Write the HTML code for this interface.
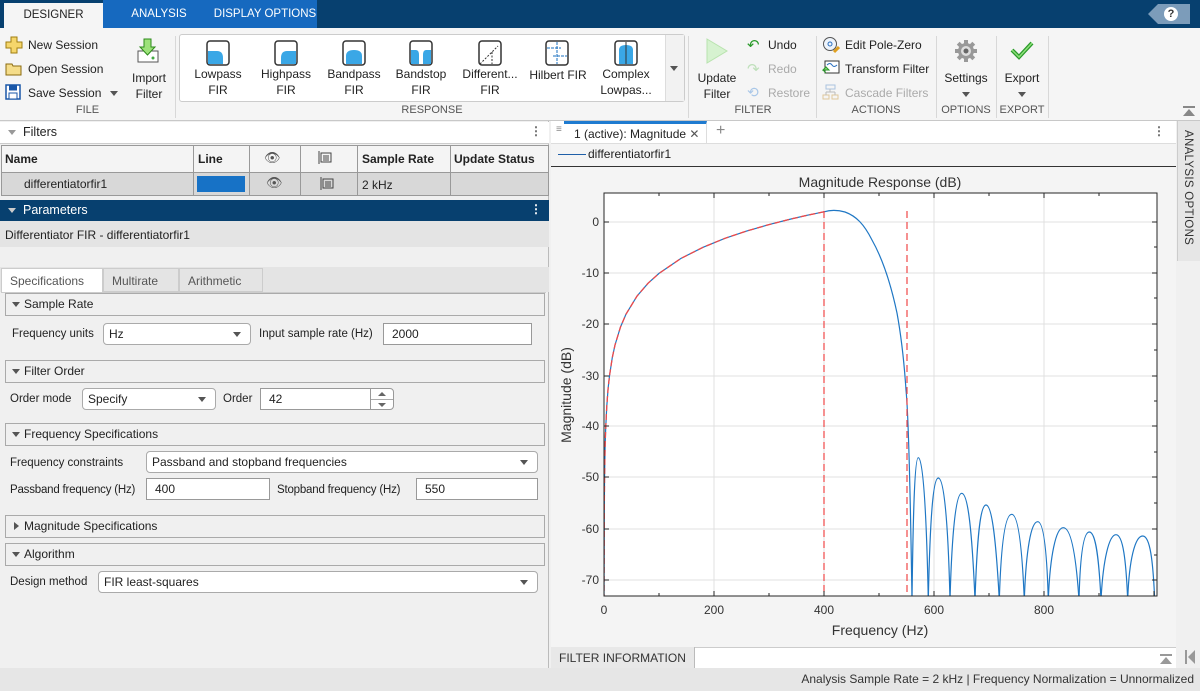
<!DOCTYPE html>
<html><head><meta charset="utf-8"><style>
*{box-sizing:border-box;margin:0;padding:0}
body{width:1200px;height:691px;overflow:hidden;background:#f0f0f0;font-family:"Liberation Sans",sans-serif;font-size:12px;color:#222;position:relative}
.a{position:absolute}
.tabbar{left:0;top:0;width:1200px;height:28px;background:#07406f}
.tab{position:absolute;top:0;height:28px;line-height:28px;text-align:center;font-size:11.5px;color:#fff}
.rib{left:0;top:28px;width:1200px;height:93px;background:#f5f5f5;border-bottom:1px solid #c8c8c8}
.sec{position:absolute;top:104px;font-size:11px;color:#555;text-align:center}
.vsep{position:absolute;top:36px;width:1px;height:82px;background:#d8d8d8}
.rl{position:absolute;font-size:12px;color:#222;white-space:nowrap}
.dis{color:#aaa}
.ri{position:absolute;text-align:center;font-size:12px;line-height:16px;color:#222}
.hdr{font-size:12.5px}
.grp{position:absolute;left:5px;width:540px;height:23px;border:1px solid #aaa;background:#f0f0f0;font-size:12px;line-height:21px;padding-left:18px}
.grp:before{content:"";position:absolute;left:6px;top:8px;border-left:4px solid transparent;border-right:4px solid transparent;border-top:5px solid #555}
.grp.c:before{left:8px;top:6px;border-top:4px solid transparent;border-bottom:4px solid transparent;border-left:5px solid #555;border-right:0}
.lbl{position:absolute;font-size:11.5px;color:#222;white-space:nowrap}
.dd{position:absolute;height:22px;border:1px solid #aaa;border-radius:4px;background:#fff;font-size:12px;line-height:20px;padding-left:5px}
.dd:after{content:"";position:absolute;right:9px;top:8px;border-left:4px solid transparent;border-right:4px solid transparent;border-top:5px solid #555}
.ed{position:absolute;height:22px;border:1px solid #999;background:#fff;font-size:12px;line-height:20px;padding-left:8px}
</style></head><body>

<div class="a tabbar"></div>
<div class="a" style="left:103px;top:0;width:214px;height:28px;background:#1669bf"></div>
<div class="tab" style="left:4px;width:99px;background:#f5f5f5;color:#222;top:3px;height:25px;line-height:25px">DESIGNER</div>
<div class="tab" style="left:109px;width:100px">ANALYSIS</div>
<div class="tab" style="left:212px;width:106px">DISPLAY OPTIONS</div>
<div class="a" style="left:1158px;top:4px;width:32px;height:20px;background:#7c9cba"></div>
<div class="a" style="left:1148px;top:4px;width:0;height:0;border-top:10px solid transparent;border-bottom:10px solid transparent;border-right:10px solid #7c9cba"></div>
<div class="a" style="left:1164px;top:7px;width:14px;height:14px;border-radius:7px;background:#fff;color:#333;font-size:11px;font-weight:bold;text-align:center;line-height:14px">?</div>

<div class="a rib"></div>
<svg class="a" style="left:5px;top:36px" width="18" height="18"><path d="M6 1h6v5h5v6h-5v5H6v-5H1V6h5z" fill="#f5d66b" stroke="#a07d10"/></svg>
<div class="rl" style="left:28px;top:38px">New Session</div>
<svg class="a" style="left:5px;top:61px" width="18" height="16"><path d="M1 3h6l1 2h8v9H1z" fill="#f5dd8a" stroke="#8a6a10"/></svg>
<div class="rl" style="left:28px;top:62px">Open Session</div>
<svg class="a" style="left:5px;top:84px" width="16" height="16"><rect x="1" y="1" width="14" height="14" fill="#fff" stroke="#1a57a8" stroke-width="1.5"/><rect x="4" y="1.5" width="8" height="5" fill="#1a57a8"/><rect x="4" y="9" width="8" height="6" fill="#fff" stroke="#1a57a8"/></svg>
<div class="rl" style="left:28px;top:86px">Save Session</div>
<div class="a" style="left:110px;top:91px;border-left:4px solid transparent;border-right:4px solid transparent;border-top:5px solid #555"></div>
<svg class="a" style="left:136px;top:38px" width="26" height="26"><rect x="2" y="13" width="20" height="11" fill="#fff" stroke="#555"/><circle cx="17" cy="20" r="1.5" fill="#4a4"/><path d="M8 1h7v8h4l-7.5 8L4 9h4z" fill="#9de27a" stroke="#2d8a1a"/></svg>
<div class="ri" style="left:124px;top:70px;width:50px">Import<br>Filter</div>
<div class="sec" style="left:0;width:175px">FILE</div>
<div class="vsep" style="left:175px"></div>
<div class="a" style="left:179px;top:34px;width:506px;height:68px;border:1px solid #ccc;border-radius:3px;background:#fff"></div>
<div class="a" style="left:665px;top:35px;width:19px;height:66px;background:#f2f2f2;border-left:1px solid #ddd"></div>
<div class="a" style="left:670px;top:66px;border-left:4px solid transparent;border-right:4px solid transparent;border-top:5px solid #555"></div>

<svg class="a" style="left:206px;top:40px" width="24" height="26"><rect x="1" y="1" width="22" height="24" rx="3" fill="#fff" stroke="#333" stroke-width="1.5"/><path d="M2 11h9q6 0 6 7v6H2z" fill="#3aa7e6"/></svg>
<div class="ri" style="left:188px;top:66px;width:60px">Lowpass<br>FIR</div>
<svg class="a" style="left:274px;top:40px" width="24" height="26"><rect x="1" y="1" width="22" height="24" rx="3" fill="#fff" stroke="#333" stroke-width="1.5"/><path d="M22 11h-9q-6 0-6 7v6h15z" fill="#3aa7e6"/></svg>
<div class="ri" style="left:256px;top:66px;width:60px">Highpass<br>FIR</div>
<svg class="a" style="left:342px;top:40px" width="24" height="26"><rect x="1" y="1" width="22" height="24" rx="3" fill="#fff" stroke="#333" stroke-width="1.5"/><path d="M4 24v-8q0-6 8-6t8 6v8z" fill="#3aa7e6"/></svg>
<div class="ri" style="left:324px;top:66px;width:60px">Bandpass<br>FIR</div>
<svg class="a" style="left:409px;top:40px" width="24" height="26"><rect x="1" y="1" width="22" height="24" rx="3" fill="#fff" stroke="#333" stroke-width="1.5"/><path d="M2 10h5q3 0 3 5v9h4v-9q0-5 3-5h5v14H2z" fill="#3aa7e6"/></svg>
<div class="ri" style="left:391px;top:66px;width:60px">Bandstop<br>FIR</div>
<svg class="a" style="left:478px;top:40px" width="24" height="26"><rect x="1" y="1" width="22" height="24" rx="3" fill="#fff" stroke="#333" stroke-width="1.5"/><path d="M2 24L20 6M14 12v12" stroke="#333" stroke-dasharray="2 1.5" fill="none"/></svg>
<div class="ri" style="left:458px;top:66px;width:64px">Different...<br>FIR</div>
<svg class="a" style="left:545px;top:40px" width="24" height="26"><rect x="1" y="1" width="22" height="24" rx="3" fill="#fff" stroke="#333" stroke-width="1.5"/><path d="M2 8h14M8 16h14M12 2v22" stroke="#1a6fbf" fill="none" stroke-dasharray="3 1"/></svg>
<div class="ri" style="left:527px;top:66px;width:62px"><span style="position:relative;top:1px">Hilbert FIR</span></div>
<svg class="a" style="left:614px;top:40px" width="24" height="26"><rect x="1" y="1" width="22" height="24" rx="3" fill="#fff" stroke="#333" stroke-width="1.5"/><path d="M5 24v-14q0-5 7-5t7 5v14z" fill="#3aa7e6"/><path d="M12 2v22" stroke="#333"/></svg>
<div class="ri" style="left:594px;top:66px;width:64px">Complex<br>Lowpas...</div>
<div class="sec" style="left:176px;width:512px">RESPONSE</div>
<div class="vsep" style="left:688px"></div>
<svg class="a" style="left:705px;top:38px" width="24" height="26"><path d="M2 1l20 12L2 25z" fill="#d6f2d0" stroke="#b8e3ae"/></svg>
<div class="ri dis" style="left:692px;top:70px;width:50px">Update<br>Filter</div>
<div class="rl" style="left:747px;top:36px;color:#2a9a2a;font-size:15px">↶</div>
<div class="rl" style="left:768px;top:38px">Undo</div>
<div class="rl dis" style="left:747px;top:60px;color:#bfe0bb;font-size:15px">↷</div>
<div class="rl dis" style="left:768px;top:62px">Redo</div>
<div class="rl dis" style="left:747px;top:84px;color:#a9c7e8;font-size:14px">⟲</div>
<div class="rl dis" style="left:768px;top:86px">Restore</div>
<div class="sec" style="left:690px;width:126px">FILTER</div>
<div class="vsep" style="left:816px"></div>
<svg class="a" style="left:822px;top:36px" width="18" height="18"><circle cx="8" cy="8" r="6.5" fill="#eef4fb" stroke="#555"/><circle cx="8" cy="8" r="2" fill="none" stroke="#2a6fbf"/><path d="M12 16l5-5" stroke="#e0a020" stroke-width="3"/></svg>
<div class="rl" style="left:845px;top:38px">Edit Pole-Zero</div>
<svg class="a" style="left:822px;top:60px" width="18" height="16"><rect x="3" y="1" width="14" height="12" fill="#fff" stroke="#333"/><path d="M5 5q3-3 5 0t5 0" stroke="#2a6fbf" fill="none"/><path d="M1 10h6l-3-3zM1 10l3 3" stroke="#2a9a2a" fill="#8fd67a"/></svg>
<div class="rl" style="left:845px;top:62px">Transform Filter</div>
<svg class="a" style="left:822px;top:84px" width="18" height="16"><rect x="4" y="1" width="9" height="4" fill="none" stroke="#aac4e0"/><rect x="1" y="11" width="6" height="4" fill="none" stroke="#e0c89a"/><rect x="10" y="11" width="6" height="4" fill="none" stroke="#e0c89a"/><path d="M8 5v3M4 8h9M4 8v3M13 8v3" stroke="#bbb" fill="none"/></svg>
<div class="rl dis" style="left:845px;top:86px">Cascade Filters</div>
<div class="sec" style="left:816px;width:120px">ACTIONS</div>
<div class="vsep" style="left:936px"></div>
<svg class="a" style="left:954px;top:39px" width="24" height="24"><g fill="#999"><circle cx="12" cy="12" r="8"/><rect x="10" y="1" width="4" height="22"/><rect x="1" y="10" width="22" height="4"/><rect x="10" y="1" width="4" height="22" transform="rotate(45 12 12)"/><rect x="10" y="1" width="4" height="22" transform="rotate(-45 12 12)"/></g><circle cx="12" cy="12" r="5" fill="#ddd"/><circle cx="12" cy="12" r="2.5" fill="#666"/></svg>
<div class="ri" style="left:938px;top:70px;width:56px">Settings</div>
<div class="a" style="left:962px;top:92px;border-left:4px solid transparent;border-right:4px solid transparent;border-top:5px solid #555"></div>
<div class="sec" style="left:936px;width:60px">OPTIONS</div>
<div class="vsep" style="left:996px"></div>
<svg class="a" style="left:1010px;top:40px" width="24" height="20"><path d="M2 10l7 7L22 3" stroke="#2b9a2b" stroke-width="4" fill="none"/><path d="M2 10l7 7L22 3" stroke="#8ee07a" stroke-width="1.5" fill="none"/></svg>
<div class="ri" style="left:996px;top:70px;width:52px">Export</div>
<div class="a" style="left:1018px;top:92px;border-left:4px solid transparent;border-right:4px solid transparent;border-top:5px solid #555"></div>
<div class="sec" style="left:996px;width:52px">EXPORT</div>
<div class="vsep" style="left:1048px"></div>
<div class="a" style="left:1183px;top:106px;width:12px;height:2px;background:#888"></div>
<div class="a" style="left:1183px;top:109px;border-left:6px solid transparent;border-right:6px solid transparent;border-bottom:7px solid #888"></div>

<div class="a" style="left:0;top:121px;width:549px;height:547px;background:#f0f0f0;border-right:1px solid #bbb"></div>
<div class="a" style="left:0;top:122px;width:549px;height:22px;background:#fff;border-bottom:1px solid #ccc"></div>
<div class="a" style="left:8px;top:130px;border-left:4px solid transparent;border-right:4px solid transparent;border-top:5px solid #999"></div>
<div class="a hdr" style="left:23px;top:125px">Filters</div>
<div class="a" style="left:530px;top:124px;font-weight:bold;color:#666">⋮</div>
<div class="a" style="left:1px;top:145px;width:548px;height:51px;background:#f4f4f4;border:1px solid #999"></div>
<div class="a" style="left:2px;top:172px;width:546px;height:23px;background:#d8d8d8;border-top:1px solid #999"></div>
<div class="a" style="left:193px;top:146px;width:1px;height:49px;background:#999"></div>
<div class="a" style="left:249px;top:146px;width:1px;height:49px;background:#999"></div>
<div class="a" style="left:300px;top:146px;width:1px;height:49px;background:#999"></div>
<div class="a" style="left:357px;top:146px;width:1px;height:49px;background:#999"></div>
<div class="a" style="left:450px;top:146px;width:1px;height:49px;background:#999"></div>
<div class="a" style="left:5px;top:152px;font-weight:bold">Name</div>
<div class="a" style="left:198px;top:152px;font-weight:bold">Line</div>
<div class="a" style="left:264px;top:150px;font-size:13px;color:#555">👁</div>
<svg class="a" style="left:318px;top:151px" width="14" height="13"><path d="M1 0v13" stroke="#444"/><rect x="3" y="2" width="10" height="9" fill="none" stroke="#444"/><path d="M5 5h6M5 7h6M5 9h6" stroke="#444"/></svg>
<div class="a" style="left:362px;top:152px;font-weight:bold">Sample Rate</div>
<div class="a" style="left:454px;top:152px;font-weight:bold">Update Status</div>
<div class="a" style="left:24px;top:177px">differentiatorfir1</div>
<div class="a" style="left:197px;top:176px;width:48px;height:16px;background:#1772c6"></div>
<div class="a" style="left:266px;top:175px;font-size:13px;color:#555">👁</div>
<svg class="a" style="left:320px;top:177px" width="14" height="13"><path d="M1 0v13" stroke="#444"/><rect x="3" y="2" width="10" height="9" fill="none" stroke="#444"/><path d="M5 5h6M5 7h6M5 9h6" stroke="#444"/></svg>
<div class="a" style="left:362px;top:178px">2 kHz</div>

<div class="a" style="left:0;top:200px;width:549px;height:21px;background:#07406f"></div>
<div class="a" style="left:8px;top:208px;border-left:4px solid transparent;border-right:4px solid transparent;border-top:5px solid #ccc"></div>
<div class="a hdr" style="left:23px;top:203px;color:#fff">Parameters</div>
<div class="a" style="left:530px;top:202px;font-weight:bold;color:#fff">⋮</div>
<div class="a" style="left:0;top:221px;width:549px;height:26px;background:#e4e4e4"></div>
<div class="a" style="left:5px;top:228px">Differentiator FIR - differentiatorfir1</div>
<div class="a" style="left:0;top:267px;width:549px;height:25px;background:#e4e4e4"></div>
<div class="a" style="left:1px;top:268px;width:102px;height:25px;background:#fff;border:1px solid #ccc;border-bottom:0;color:#555;padding:5px 0 0 8px">Specifications</div>
<div class="a" style="left:103px;top:268px;width:76px;height:24px;border:1px solid #ccc;color:#555;padding:5px 0 0 8px">Multirate</div>
<div class="a" style="left:179px;top:268px;width:84px;height:24px;border:1px solid #ccc;color:#555;padding:5px 0 0 8px">Arithmetic</div>
<div class="a" style="left:1px;top:292px;width:545px;height:376px;background:#f0f0f0;border-top:1px solid #ccc"></div>

<div class="grp" style="top:293px">Sample Rate</div>
<div class="lbl" style="left:12px;top:328px">Frequency units</div>
<div class="dd" style="left:103px;top:323px;width:148px">Hz</div>
<div class="lbl" style="left:259px;top:328px">Input sample rate (Hz)</div>
<div class="ed" style="left:383px;top:323px;width:149px">2000</div>

<div class="grp" style="top:360px">Filter Order</div>
<div class="lbl" style="left:10px;top:393px">Order mode</div>
<div class="dd" style="left:82px;top:388px;width:134px">Specify</div>
<div class="lbl" style="left:223px;top:393px">Order</div>
<div class="ed" style="left:260px;top:388px;width:134px;border-radius:0 4px 4px 0">42</div>
<div class="a" style="left:370px;top:388px;width:24px;height:22px;border-left:1px solid #999"></div>
<div class="a" style="left:378px;top:392px;border-left:4px solid transparent;border-right:4px solid transparent;border-bottom:4px solid #666"></div>
<div class="a" style="left:378px;top:403px;border-left:4px solid transparent;border-right:4px solid transparent;border-top:4px solid #666"></div>
<div class="a" style="left:371px;top:399px;width:22px;height:1px;background:#aaa"></div>

<div class="grp" style="top:423px">Frequency Specifications</div>
<div class="lbl" style="left:10px;top:457px">Frequency constraints</div>
<div class="dd" style="left:146px;top:451px;width:392px">Passband and stopband frequencies</div>
<div class="lbl" style="left:10px;top:484px;letter-spacing:-0.2px">Passband frequency (Hz)</div>
<div class="ed" style="left:146px;top:478px;width:124px">400</div>
<div class="lbl" style="left:277px;top:484px;letter-spacing:-0.2px">Stopband frequency (Hz)</div>
<div class="ed" style="left:416px;top:478px;width:122px">550</div>

<div class="grp c" style="top:515px">Magnitude Specifications</div>
<div class="grp" style="top:543px">Algorithm</div>
<div class="lbl" style="left:10px;top:576px">Design method</div>
<div class="dd" style="left:98px;top:571px;width:440px">FIR least-squares</div>

<div class="a" style="left:551px;top:121px;width:625px;height:547px;background:#f4f4f4"></div>
<div class="a" style="left:551px;top:121px;width:625px;height:23px;background:#fff;border-bottom:1px solid #ddd"></div>
<div class="a" style="left:556px;top:124px;color:#888;font-size:10px">≡</div>
<div class="a" style="left:564px;top:121px;width:143px;height:23px;border-top:3px solid #1f7bd0;border-right:1px solid #ddd;padding:3px 0 0 10px">1 (active): Magnitude <span style="color:#555">✕</span></div>
<div class="a" style="left:716px;top:122px;font-size:16px;color:#888">+</div>
<div class="a" style="left:1153px;top:124px;font-weight:bold;color:#666">⋮</div>
<div class="a" style="left:558px;top:154px;width:28px;height:1px;background:#1f5fa8"></div>
<div class="a" style="left:588px;top:147px;color:#222">differentiatorfir1</div>
<div class="a" style="left:551px;top:166px;width:625px;height:1px;background:#333"></div>

<svg class="a" style="left:551px;top:167px" width="625" height="480" viewBox="551 167 625 480">
<rect x="604" y="193" width="553" height="403" fill="#fff"/>
<g stroke="#e1e1e1" stroke-width="1">
<path d="M714 193V596M824 193V596M934 193V596M1044 193V596"/>
<path d="M604 222H1157M604 273H1157M604 324H1157M604 376H1157M604 426H1157M604 477H1157M604 529H1157M604 580H1157"/>
</g>
<clipPath id="cp"><rect x="604" y="193" width="553" height="403"/></clipPath>
<g clip-path="url(#cp)" fill="none">
<path d="M604 600L604.2 550L604.3 509L604.55 478.2L605.1 447.3L605.65 429.4L606.75 406.6L608.1 388.4L609.5 375.8L612.25 357.8L615 345L620.5 327L626 314.2L637 296.1L648 283.3L659 273.4L681 258.4L703 247.3L725 238.3L747 230.9L769 224.6L791 219L807.5 215.2L824 211.8C830 210 838 210 845 212C856 216 864 224 872 240C881 256 890 280 897 313C901 335 904 360 906 390C908 410 910 470 912 600" stroke="#1f77c4" stroke-width="1.2"/>
<path d="M604 600L604.2 550L604.3 509L604.55 478.2L605.1 447.3L605.65 429.4L606.75 406.6L608.1 388.4L609.5 375.8L612.25 357.8L615 345L620.5 327L626 314.2L637 296.1L648 283.3L659 273.4L681 258.4L703 247.3L725 238.3L747 230.9L769 224.6L791 219L807.5 215.2L824 211.8" stroke="#f04848" stroke-width="1.3" stroke-dasharray="6 3"/>
<path d="M824 211V596M907 211V596" stroke="#f04848" stroke-width="1.2" stroke-dasharray="7 4"/>
<g stroke="#1f77c4" stroke-width="1.2">
<path d="M912 600C913 520 914.5 457.7 918.3 457.7C922 457.7 926 490 928.3 600"/>
<path d="M928.3 600C930 520 933 478 938.3 478C944 478 948 520 950 600"/>
<path d="M950 600C952 530 956 493.3 961.7 493.3C968 493.3 972 530 975 600"/>
<path d="M975 600C977 540 980 505 986 505C992 505 996 540 999.3 600"/>
<path d="M999.3 600C1001 545 1005 514.3 1011.7 514.3C1018 514.3 1022 545 1024.3 600"/>
<path d="M1024.3 600C1026 550 1031 521.7 1037.7 521.7C1044 521.7 1047 555 1048.3 600"/>
<path d="M1048.3 600C1050 555 1056 527.7 1063.3 527.7C1071 527.7 1076 555 1079 600"/>
<path d="M1079 600C1080 560 1083 532 1089.3 532C1096 532 1099 560 1101 600"/>
<path d="M1101 600C1103 560 1109 534.7 1116 534.7C1123 534.7 1126 560 1127.7 600"/>
<path d="M1127.7 600C1129 560 1135 536 1142.7 536C1150 536 1153 560 1154.7 600"/>
</g>
</g>
<rect x="604" y="193" width="553" height="403" fill="none" stroke="#262626" stroke-width="1"/>
<g stroke="#262626">
<path d="M604 596v-5M659 596v-3M714 596v-5M769 596v-3M824 596v-5M879 596v-3M934 596v-5M989 596v-3M1044 596v-5M1099 596v-3M1154 596v-5"/>
<path d="M604 193v5M659 193v3M714 193v5M769 193v3M824 193v5M879 193v3M934 193v5M989 193v3M1044 193v5M1099 193v3"/>
<path d="M604 222h5M604 273h5M604 324h5M604 376h5M604 426h5M604 477h5M604 529h5M604 580h5M1157 222h-5M1157 273h-5M1157 324h-5M1157 376h-5M1157 426h-5M1157 477h-5M1157 529h-5M1157 580h-5M1157 247h-3M1157 298h-3M1157 350h-3M1157 401h-3M1157 452h-3M1157 503h-3M1157 555h-3"/>
</g>
<g font-family="Liberation Sans, sans-serif" font-size="12" fill="#333" text-anchor="end">
<text x="599" y="226">0</text><text x="599" y="277">-10</text><text x="599" y="328">-20</text><text x="599" y="380">-30</text><text x="599" y="430">-40</text><text x="599" y="481">-50</text><text x="599" y="533">-60</text><text x="599" y="584">-70</text>
</g>
<g font-family="Liberation Sans, sans-serif" font-size="12" fill="#333" text-anchor="middle">
<text x="604" y="614">0</text><text x="714" y="614">200</text><text x="824" y="614">400</text><text x="934" y="614">600</text><text x="1044" y="614">800</text>
<text x="880" y="635" font-size="14">Frequency (Hz)</text>
<text x="880" y="187" font-size="14">Magnitude Response (dB)</text>
<text transform="translate(571 395) rotate(-90)" font-size="14">Magnitude (dB)</text>
</g>
</svg>

<div class="a" style="left:551px;top:647px;width:625px;height:21px;background:#fff;border-top:1px solid #ccc"></div>
<div class="a" style="left:551px;top:647px;width:144px;height:21px;background:#e8e8e8;border-right:1px solid #bbb;padding:4px 0 0 8px;color:#333">FILTER INFORMATION</div>
<div class="a" style="left:1160px;top:654px;width:12px;height:2px;background:#999"></div>
<div class="a" style="left:1160px;top:657px;border-left:6px solid transparent;border-right:6px solid transparent;border-bottom:7px solid #999"></div>
<div class="a" style="left:1185px;top:650px;width:2px;height:14px;background:#999"></div>
<div class="a" style="left:1188px;top:650px;border-top:7px solid transparent;border-bottom:7px solid transparent;border-right:7px solid #999"></div>

<div class="a" style="left:1177px;top:121px;width:23px;height:140px;background:#e6e6e6;border-left:1px solid #ccc"></div>
<div class="a" style="left:1182px;top:130px;writing-mode:vertical-rl;font-size:11.5px;color:#333;letter-spacing:0.3px">ANALYSIS OPTIONS</div>

<div class="a" style="left:0;top:668px;width:1200px;height:23px;background:#e6e6e6"></div>
<div class="a" style="right:6px;top:672px;color:#333">Analysis Sample Rate = 2 kHz | Frequency Normalization = Unnormalized</div>
</body></html>
